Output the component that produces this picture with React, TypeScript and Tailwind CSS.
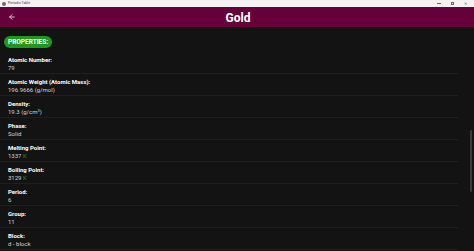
import { ArrowLeft } from 'lucide-react'

const props = [
  { label: 'Atomic Number:', value: '79' },
  { label: 'Atomic Weight (Atomic Mass):', value: '196.9666 (g/mol)' },
  { label: 'Density:', value: <>19.3 (g/cm<sup className="text-[4px]">3</sup>)</> },
  { label: 'Phase:', value: 'Solid' },
  { label: 'Melting Point:', value: <>1337 <span className="text-[#2f8f2f]">K</span></> },
  { label: 'Boiling Point:', value: <>3129 <span className="text-[#2f8f2f]">K</span></> },
  { label: 'Period:', value: '6' },
  { label: 'Group:', value: '11' },
  { label: 'Block:', value: 'd - block' },
]

export default function App() {
  return (
    <div className="relative w-[474px] h-[251px] overflow-hidden bg-[#131313] font-['Roboto',sans-serif]">
      {/* window title bar */}
      <div className="h-[7px] bg-[#f3f3f3] flex items-center px-[2px]">
        <div className="w-[4px] h-[4px] rounded-full bg-[#6a6a6a]" />
        <span className="ml-[2px] text-[3.5px] leading-none text-[#444]">Periodic Table</span>
        <div className="ml-auto flex items-center gap-[10px] pr-[5px] text-[#555]">
          <div className="w-[4px] h-px bg-[#666]" />
          <div className="w-[3px] h-[3px] border border-[#666]" />
          <span className="text-[4px] leading-none">✕</span>
        </div>
      </div>

      {/* app bar */}
      <div className="h-[20px] bg-[#65003a] flex items-center relative">
        <ArrowLeft size={8} strokeWidth={2.5} className="ml-[8px] text-[#f3dbe6]" />
        <div className="flex-1 text-center pr-[6px]">
          <span className="text-[12px] font-bold text-white leading-none">Gold</span>
        </div>
        <div className="w-[8px]" />
      </div>

      <div className="pl-[4px] pr-[16px]">
        <div className="mt-[8px] inline-flex items-center h-[12px] px-[4px] rounded-full bg-[#1c9a1c]">
          <span className="text-[6.5px] font-bold text-white leading-none">PROPERTIES:</span>
        </div>
        <div className="mt-[1px] -ml-[4px]">
          {props.map((p, i) => (
            <div key={i} className="pt-[4px] pb-[1px] pl-[8px] border-b border-[#1f1f1f]">
              <div className="text-[6px] leading-[8px] font-bold text-white">{p.label}</div>
              <div className="text-[6px] leading-[8px] text-[#d4d4d4]">{p.value}</div>
            </div>
          ))}
        </div>
      </div>

      {/* scrollbar */}
      <div className="absolute right-[2px] top-[130px] w-[2px] h-[62px] rounded-full bg-[#3a3a3a]" />
    </div>
  )
}
